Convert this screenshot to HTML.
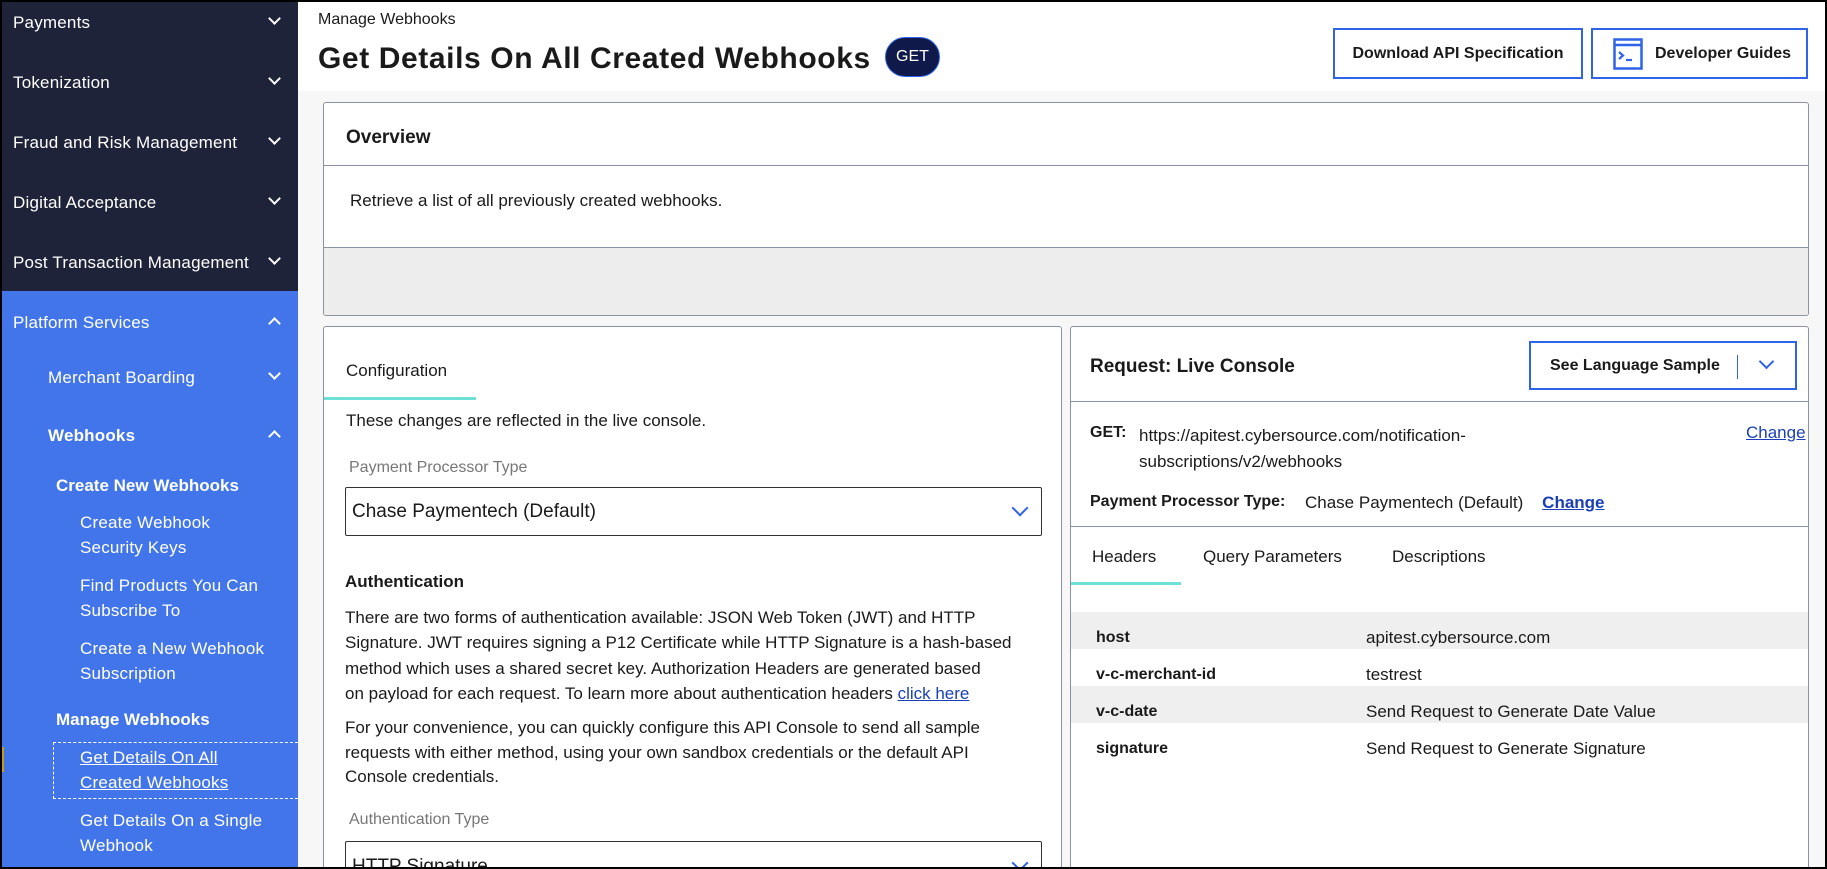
<!DOCTYPE html>
<html><head><meta charset="utf-8"><style>
*{box-sizing:border-box;margin:0;padding:0}
body{width:1827px;height:869px;overflow:hidden;background:#000;font-family:"Liberation Sans",sans-serif;color:#1a1a1a;position:relative}
.frame{position:absolute;left:2px;top:2px;right:2px;bottom:2px;background:#f7f7f7;overflow:hidden}
.abs{position:absolute;white-space:nowrap}
.side{position:absolute;left:0;top:0;width:296px;height:869px;background:#1f233a}
.blue{position:absolute;left:0;top:289px;width:296px;height:600px;background:#4275ea}
.si{position:absolute;left:11px;color:#fff;font-size:17px;letter-spacing:0.2px}
.chev{position:absolute;width:9px;height:9px;border-right:2px solid #fff;border-bottom:2px solid #fff;transform:rotate(45deg)}
.chevu{position:absolute;width:9px;height:9px;border-left:2px solid #fff;border-top:2px solid #fff;transform:rotate(45deg)}
.sub{position:absolute;left:78px;color:#fff;font-size:17px;line-height:25px;letter-spacing:0.2px}
.hd{position:absolute;left:54px;color:#fff;font-size:17px;font-weight:bold}
.panel{position:absolute;background:#fff;border:1px solid #8a93a3;border-radius:3px}
.btn{position:absolute;border:2px solid #2f63e8;background:#fff;font-size:16px;font-weight:bold;display:flex;align-items:center;justify-content:center}
.t{font-size:17px}
.sel{position:absolute;border:1px solid #333;border-radius:2px;background:#fff;font-size:19px;padding-left:6px;display:flex;align-items:center}
.bchev{position:absolute;width:12px;height:12px;border-right:2px solid #2f63e8;border-bottom:2px solid #2f63e8;transform:rotate(45deg)}
a{color:#1a3fb8;text-decoration:underline}
</style></head><body><div class="frame">
<div class="side">
<div class="si" style="top:11px">Payments</div><div class="chev" style="left:268px;top:12px"></div>
<div class="si" style="top:71px">Tokenization</div><div class="chev" style="left:268px;top:72px"></div>
<div class="si" style="top:131px">Fraud and Risk Management</div><div class="chev" style="left:268px;top:132px"></div>
<div class="si" style="top:191px">Digital Acceptance</div><div class="chev" style="left:268px;top:192px"></div>
<div class="si" style="top:251px">Post Transaction Management</div><div class="chev" style="left:268px;top:252px"></div>
<div class="blue"></div>
<div class="si" style="top:311px">Platform Services</div><div class="chevu" style="left:268px;top:317px"></div>
<div class="si" style="left:46px;top:366px">Merchant Boarding</div><div class="chev" style="left:268px;top:367px"></div>
<div class="si" style="left:46px;top:424px;font-weight:bold">Webhooks</div><div class="chevu" style="left:268px;top:430px"></div>
<div class="hd" style="top:474px">Create New Webhooks</div>
<div class="sub" style="top:508px">Create Webhook<br>Security Keys</div>
<div class="sub" style="top:571px">Find Products You Can<br>Subscribe To</div>
<div class="sub" style="top:634px">Create a New Webhook<br>Subscription</div>
<div class="hd" style="top:708px">Manage Webhooks</div>
<div style="position:absolute;left:51px;top:740px;width:250px;height:57px;border:1px dashed #fff;border-right:none"></div>
<div class="sub" style="top:743px;text-decoration:underline">Get Details On All<br>Created Webhooks</div>
<div class="sub" style="top:806px">Get Details On a Single<br>Webhook</div>
<div style="position:absolute;left:0;top:745px;width:2px;height:25px;background:#c89a1a"></div>
</div>
<div style="position:absolute;left:296px;top:0;width:1531px;height:89px;background:#fff"></div>
<div class="abs" style="left:316px;top:9px;font-size:16px">Manage Webhooks</div>
<div class="abs" style="left:316px;top:40px;font-size:30px;font-weight:bold;letter-spacing:0.6px">Get Details On All Created Webhooks</div>
<div class="abs" style="left:883px;top:35px;width:55px;height:40px;border-radius:20px;background:#0f1a4a;border:1px solid #2f63e8;color:#fff;font-size:16px;display:flex;align-items:center;justify-content:center">GET</div>
<div class="btn" style="left:1331px;top:26px;width:250px;height:51px">Download API Specification</div>
<div class="btn" style="left:1589px;top:26px;width:217px;height:51px;justify-content:flex-start;padding-left:20px">
<svg width="30" height="32" viewBox="0 0 30 32" style="margin-right:12px"><rect x="1.5" y="1.5" width="27" height="29" fill="none" stroke="#2f63e8" stroke-width="2.5"/><line x1="1.5" y1="7" x2="28.5" y2="7" stroke="#2f63e8" stroke-width="2.5"/><path d="M6 14l4 3.5-4 3.5" fill="none" stroke="#2f63e8" stroke-width="2.2"/><line x1="13" y1="22" x2="19" y2="22" stroke="#2f63e8" stroke-width="2.2"/></svg>Developer Guides</div>

<div class="panel" style="left:321px;top:100px;width:1486px;height:214px;overflow:hidden">
<div class="abs" style="left:22px;top:24px;font-size:19px;font-weight:bold">Overview</div>
<div style="position:absolute;left:0;top:62px;width:100%;border-top:1px solid #8a93a3"></div>
<div class="abs t" style="left:26px;top:88px">Retrieve a list of all previously created webhooks.</div>
<div style="position:absolute;left:0;top:144px;width:100%;height:70px;background:#ededed;border-top:1px solid #8a93a3"></div>
</div>

<div class="panel" style="left:321px;top:324px;width:739px;height:560px;overflow:hidden">
<div class="abs t" style="left:22px;top:34px">Configuration</div>
<div style="position:absolute;left:0;top:70px;width:152px;height:3px;background:#6ee0d6"></div>
<div class="abs t" style="left:22px;top:84px">These changes are reflected in the live console.</div>
<div class="abs" style="left:25px;top:132px;font-size:16px;color:#777">Payment Processor Type</div>
<div class="sel" style="left:21px;top:160px;width:697px;height:49px">Chase Paymentech (Default)</div>
<div class="bchev" style="left:690px;top:175px"></div>
<div class="abs" style="left:21px;top:245px;font-size:17px;font-weight:bold">Authentication</div>
<div style="position:absolute;left:21px;top:278px;width:690px;font-size:17px;line-height:25.3px;white-space:normal">There are two forms of authentication available: JSON Web Token (JWT) and HTTP Signature. JWT requires signing a P12 Certificate while HTTP Signature is a hash-based method which uses a shared secret key. Authorization Headers are generated based<br>on payload for each request. To learn more about authentication headers <a>click here</a></div>
<div style="position:absolute;left:21px;top:389px;width:690px;font-size:17px;line-height:24.7px">For your convenience, you can quickly configure this API Console to send all sample requests with either method, using your own sandbox credentials or the default API<br>Console credentials.</div>
<div class="abs" style="left:25px;top:484px;font-size:16px;color:#777">Authentication Type</div>
<div class="sel" style="left:21px;top:514px;width:697px;height:49px;align-items:flex-start;padding-top:14px">HTTP Signature</div>
<div class="bchev" style="left:690px;top:530px"></div>
</div>

<div class="panel" style="left:1068px;top:324px;width:739px;height:560px;overflow:hidden">
<div class="abs" style="left:19px;top:29px;font-size:19px;font-weight:bold">Request: Live Console</div>
<div class="btn" style="left:458px;top:14px;width:268px;height:49px;justify-content:flex-start;padding-left:19px;font-size:16px">See Language Sample
<div style="position:absolute;left:206px;top:12px;height:24px;border-left:1px solid #2f63e8"></div>
<div class="bchev" style="left:230px;top:13px;width:11px;height:11px"></div></div>
<div style="position:absolute;left:0;top:74px;width:100%;border-top:1px solid #8a93a3"></div>
<div class="abs" style="left:19px;top:97px;font-size:16px;font-weight:bold">GET:</div>
<div class="abs t" style="left:68px;top:96px;line-height:26px">https://apitest.cybersource.com/notification-<br>subscriptions/v2/webhooks</div>
<div class="abs t" style="left:675px;top:96px"><a>Change</a></div>
<div class="abs" style="left:19px;top:166px;font-size:16px;font-weight:bold">Payment Processor Type:</div>
<div class="abs t" style="left:234px;top:166px">Chase Paymentech (Default) &nbsp;&nbsp;&nbsp;<a style="font-weight:bold">Change</a></div>
<div style="position:absolute;left:0;top:199px;width:100%;border-top:1px solid #8a93a3"></div>
<div class="abs t" style="left:21px;top:220px">Headers</div>
<div class="abs t" style="left:132px;top:220px">Query Parameters</div>
<div class="abs t" style="left:321px;top:220px">Descriptions</div>
<div style="position:absolute;left:0;top:255px;width:110px;height:3px;background:#6ee0d6"></div>
<div style="position:absolute;left:0;top:285px;width:100%;height:37px;background:#efefef"></div>
<div style="position:absolute;left:0;top:359px;width:100%;height:37px;background:#efefef"></div>
<div class="abs" style="left:25px;top:302px;font-size:16px;font-weight:bold">host</div><div class="abs t" style="left:295px;top:301px">apitest.cybersource.com</div>
<div class="abs" style="left:25px;top:339px;font-size:16px;font-weight:bold">v-c-merchant-id</div><div class="abs t" style="left:295px;top:338px">testrest</div>
<div class="abs" style="left:25px;top:376px;font-size:16px;font-weight:bold">v-c-date</div><div class="abs t" style="left:295px;top:375px">Send Request to Generate Date Value</div>
<div class="abs" style="left:25px;top:413px;font-size:16px;font-weight:bold">signature</div><div class="abs t" style="left:295px;top:412px">Send Request to Generate Signature</div>
</div>
</div></body></html>
